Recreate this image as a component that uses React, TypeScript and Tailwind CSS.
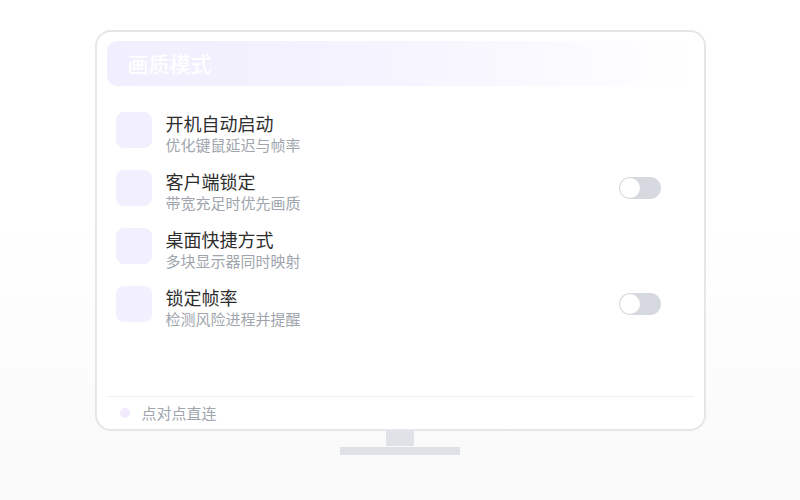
const rows = [
  { title: "开机自动启动", desc: "优化键鼠延迟与帧率", toggle: false },
  { title: "客户端锁定", desc: "带宽充足时优先画质", toggle: true },
  { title: "桌面快捷方式", desc: "多块显示器同时映射", toggle: false },
  { title: "锁定帧率", desc: "检测风险进程并提醒", toggle: true },
];

const Toggle = () => (
  <div className="relative w-[42px] h-[22px] rounded-full bg-[#d6d9df] mt-[7px]">
    <div className="absolute left-[1px] top-[1px] w-5 h-5 rounded-full bg-white" />
  </div>
);

const App = () => {
  return (
    <div
      className="w-[800px] h-[500px] bg-linear-to-b from-white from-45% to-[#f9f9fa] flex flex-col items-center pt-[30px]"
      style={{ fontFamily: '"Noto Sans CJK SC", "Noto Sans", sans-serif' }}
    >
      {/* Screen */}
      <div className="w-[611px] h-[401px] border-2 border-[#e4e6ea] rounded-[16px] bg-white px-2.5 pt-[9px] flex flex-col">
        <div className="h-[45px] rounded-[10px] bg-linear-to-r from-[#f1eefe] via-[#f6f4ff] to-white flex items-center pl-[21px]">
          <span className="text-[21px] font-medium text-white leading-none">画质模式</span>
        </div>

        <div className="mt-[26px] flex flex-col gap-[18px] pl-[9px] pr-[33px]">
          {rows.map((r) => (
            <div key={r.title} className="flex items-start h-10">
              <div className="w-9 h-9 rounded-[8px] bg-[#f2effe]" />
              <div className="ml-[14px] flex-1 flex flex-col">
                <span className="text-[18px] leading-[22px] text-[#2e2e2e]">{r.title}</span>
                <span className="text-[15px] leading-[20px] mt-[1px] text-[#a0a5ad]">{r.desc}</span>
              </div>
              {r.toggle && <Toggle />}
            </div>
          ))}
        </div>

        <div className="flex-1" />

        <div className="h-[33px] border-t border-[#eceef1] flex items-center pl-[13px]">
          <div className="w-[10px] h-[10px] rounded-full bg-[#efebfd]" />
          <span className="ml-[12px] text-[15px] text-[#a0a5ad]">点对点直连</span>
        </div>
      </div>

      {/* Stand */}
      <div className="w-[28px] h-[15px] bg-[#dfe2e6]" />
      <div className="w-[120px] h-[8px] bg-[#dfe2e6] mt-[1px]" />
    </div>
  );
};

export default App;
